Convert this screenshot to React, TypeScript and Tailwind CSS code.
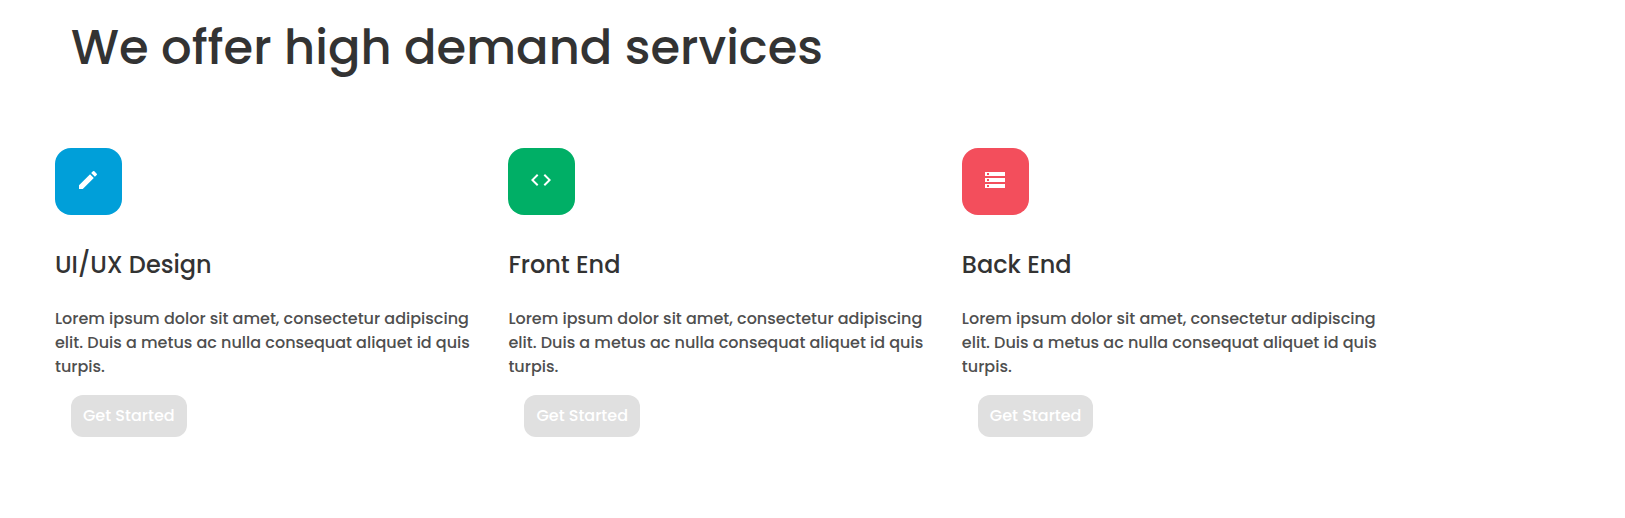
import { MdCode, MdEdit, MdStorage } from "react-icons/md";
import type { IconType } from "react-icons";

type Service = { title: string; icon: IconType; color: string };

const services: Service[] = [
  { title: "UI/UX Design", icon: MdEdit, color: "bg-[#009fd9]" },
  { title: "Front End", icon: MdCode, color: "bg-[#00af66]" },
  { title: "Back End", icon: MdStorage, color: "bg-[#f34e5c]" },
];

function ServiceCard({ title, icon: Icon, color }: Service) {
  return (
    <article className="flex flex-col items-start">
      <div className={`size-[67px] rounded-2xl pt-5 pl-[21px] text-white ${color}`}>
        <Icon size={24} aria-hidden="true" />
      </div>
      <h2 className="mt-8 text-2xl leading-9 font-medium text-[#333]">{title}</h2>
      <p className="mt-6 text-base leading-6 font-medium text-[#4f4f4f]">
        Lorem ipsum dolor sit amet, consectetur adipiscing elit. Duis a metus ac nulla consequat aliquet id quis
        turpis.
      </p>
      <button
        type="button"
        disabled
        className="mt-4 ml-4 h-[42px] rounded-xl bg-[#e0e0e0] px-3 text-base font-medium text-white"
      >
        Get Started
      </button>
    </article>
  );
}

export default function App() {
  return (
    <main className="bg-white pb-20 font-['Poppins','Inter',sans-serif]">
      <h1 className="pt-3 pl-[71px] text-5xl leading-[72px] font-medium text-[#333]">We offer high demand services</h1>
      <section className="mt-16 grid w-[85%] grid-cols-3 gap-[34px] pl-[55px]">
        {services.map((service) => (
          <ServiceCard key={service.title} {...service} />
        ))}
      </section>
    </main>
  );
}
